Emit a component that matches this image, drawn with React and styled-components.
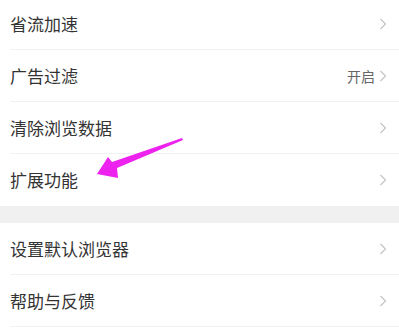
import React from "react";
import styled, { createGlobalStyle } from "styled-components";

const Global = createGlobalStyle`
  html, body { margin: 0; padding: 0; background: #ffffff; }
  body { font-family: "Noto Sans CJK SC", "Noto Sans", sans-serif; overflow: hidden; }
`;

const Page = styled.div`
  position: relative;
  width: 399px;
  height: 328px;
  overflow: hidden;
  background: #ffffff;
`;

const Group = styled.div`
  display: flex;
  flex-direction: column;
  margin-top: ${(p) => p.$offset || 0}px;
`;

const Row = styled.div`
  box-sizing: border-box;
  height: 52px;
  margin-left: 10px;
  padding-right: 12px;
  display: flex;
  align-items: center;
  justify-content: space-between;
  border-bottom: 1px solid ${(p) => (p.$last ? "transparent" : "#f1f1f1")};
`;

const Label = styled.span`
  font-size: 17px;
  color: #333333;
  line-height: 1;
`;

const Right = styled.div`
  display: flex;
  align-items: center;
  gap: 4px;
`;

const Value = styled.span`
  font-size: 14px;
  color: #666666;
  line-height: 1;
`;

const Spacer = styled.div`
  height: 17px;
  background: #f0f0f0;
`;

const Arrow = styled.svg`
  position: absolute;
  left: 0;
  top: 0;
  pointer-events: none;
`;

const Chevron = () => (
  <svg width="8" height="12" viewBox="0 0 8 12">
    <path d="M1.5 1 L6.5 6 L1.5 11" fill="none" stroke="#c4c4c4" strokeWidth="1.2" />
  </svg>
);

const top = [
  { label: "省流加速" },
  { label: "广告过滤", value: "开启" },
  { label: "清除浏览数据" },
  { label: "扩展功能" },
];
const bottom = [{ label: "设置默认浏览器" }, { label: "帮助与反馈" }];

export default function App() {
  return (
    <Page>
      <Global />
      <Group $offset={-2}>
        {top.map((r, i) => (
          <Row key={r.label} $last={i === top.length - 1}>
            <Label>{r.label}</Label>
            <Right>
              {r.value && <Value>{r.value}</Value>}
              <Chevron />
            </Right>
          </Row>
        ))}
      </Group>
      <Spacer />
      <Group>
        {bottom.map((r) => (
          <Row key={r.label}>
            <Label>{r.label}</Label>
            <Right>
              <Chevron />
            </Right>
          </Row>
        ))}
      </Group>
      <Arrow width="399" height="328" viewBox="0 0 399 328">
        <polygon
          points="97,174 108,157 112,162 182,138 183,140 117,168 118,178"
          fill="#ee22ee"
        />
      </Arrow>
    </Page>
  );
}
